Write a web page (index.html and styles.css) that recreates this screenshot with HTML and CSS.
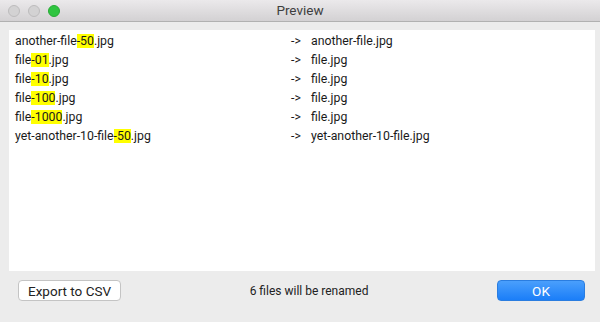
FILE: index.html
```html
<!DOCTYPE html>
<html lang="en">
<head>
  <meta charset="UTF-8">
  <meta name="viewport" content="width=device-width, initial-scale=1.0">
  <title>Preview</title>
  <link rel="stylesheet" href="styles.css">
</head>
<body>

  <div class="window">
    <div class="titlebar">
      <div class="lights">
        <span class="light"></span>
        <span class="light"></span>
        <span class="light light-green"></span>
      </div>
      <div class="title">Preview</div>
    </div>

    <div class="content">
      <ul class="list">
        <li class="row">
          <span>another-file<mark>-50</mark>.jpg</span>
          <span>-&gt;</span>
          <span>another-file.jpg</span>
        </li>
        <li class="row">
          <span>file<mark>-01</mark>.jpg</span>
          <span>-&gt;</span>
          <span>file.jpg</span>
        </li>
        <li class="row">
          <span>file<mark>-10</mark>.jpg</span>
          <span>-&gt;</span>
          <span>file.jpg</span>
        </li>
        <li class="row">
          <span>file<mark>-100</mark>.jpg</span>
          <span>-&gt;</span>
          <span>file.jpg</span>
        </li>
        <li class="row">
          <span>file<mark>-1000</mark>.jpg</span>
          <span>-&gt;</span>
          <span>file.jpg</span>
        </li>
        <li class="row">
          <span>yet-another-10-file<mark>-50</mark>.jpg</span>
          <span>-&gt;</span>
          <span>yet-another-10-file.jpg</span>
        </li>
      </ul>

      <div class="footer">
        <button class="btn">Export to CSV</button>
        <div class="status">6 files will be renamed</div>
        <button class="btn btn-primary">OK</button>
      </div>
    </div>
  </div>

</body>
</html>
```

FILE: styles.css
```css
* {
  margin: 0;
  padding: 0;

  box-sizing: border-box;
  font-family: Roboto, 'Liberation Sans', sans-serif;
}

body {
  width: 600px;
  height: 322px;
  background: #ececec;
}

ul {
  list-style: none;
}

.window {
  display: flex;
  flex-direction: column;
  height: 322px;
}

/* Title bar */
.titlebar {
  position: relative;
  height: 22px;

  background: linear-gradient(#ebe9eb, #d3d1d3);
  border-bottom: 1px solid #b1b1b1;
}

.lights {
  display: flex;
  gap: 8px;
  padding: 5px 0 0 8px;
}

.light {
  width: 12px;
  height: 12px;

  border-radius: 50%;
  background: #d3d2d3;
  border: 1px solid #bdbcbd;
}

.light-green {
  background: #2fc540;
  border-color: #27ab35;
}

.title {
  position: absolute;
  top: 0;
  left: 0;
  right: 0;

  line-height: 21px;
  font-size: 13.5px;
  color: #3e3e3e;
  text-align: center;
}

/* Content */
.content {
  flex: 1;
  display: flex;
  flex-direction: column;
  padding: 8px 5px 0 9px;
}

.list {
  height: 241px;
  padding: 2px 6px;

  background: #fff;
}

.row {
  display: grid;
  grid-template-columns: 276px 20px 1fr;

  height: 19px;
  line-height: 19px;
  font-size: 12.3px;
  color: #1a1a1a;
}

mark {
  background: #ffff00;
  color: inherit;
}

/* Footer */
.footer {
  display: flex;
  align-items: center;

  padding: 9px 10px 0 9px;
}

.btn {
  height: 21px;
  padding: 0 9px;

  background: #fff;
  border: 1px solid #c4c4c4;
  border-radius: 4px;

  font-size: 13.5px;
  color: #222;
}

.status {
  flex: 1;
  font-size: 12px;
  color: #222;
  text-align: center;
}

.btn-primary {
  width: 88px;

  background: linear-gradient(#4a9ffc, #1b7ef8);
  border-color: #2a7de0;
  color: #fff;
}
```
